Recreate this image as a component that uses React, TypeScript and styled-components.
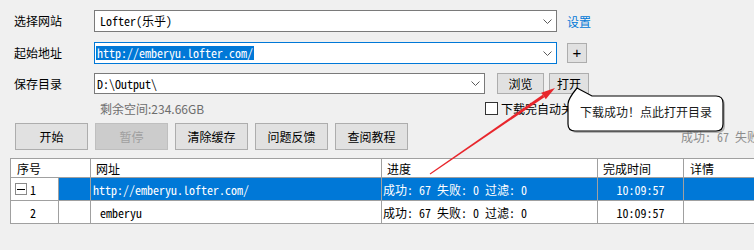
import React from "react";
import styled, { createGlobalStyle } from "styled-components";

const SANS = `"Noto Sans CJK SC", "Noto Sans", sans-serif`;
const MONO = `"Noto Sans Mono CJK SC", "Liberation Mono", "Noto Sans CJK SC", monospace`;

const Global = createGlobalStyle`
  html, body { margin: 0; padding: 0; background: #f0f0f0; }
  body { font-family: ${SANS}; font-size: 12px; color: #000; }
  * { box-sizing: border-box; }
`;

const Window = styled.div`
  position: relative;
  width: 754px;
  height: 250px;
  overflow: hidden;
  background: #f0f0f0;
  display: flex;
  flex-direction: column;
  padding-top: 10px;
`;

const FormRow = styled.div<{ $h: number; $mt?: number }>`
  display: flex;
  align-items: center;
  height: ${(p) => p.$h}px;
  margin-top: ${(p) => p.$mt ?? 0}px;
  padding-left: 14px;
  flex-shrink: 0;
`;

const Label = styled.div`
  width: 80px;
  font-family: ${SANS};
  font-size: 12px;
  line-height: 16px;
  color: #000;
`;

const Combo = styled.div<{ $w: number; $focus?: boolean; $pad: number }>`
  width: ${(p) => p.$w}px;
  height: 100%;
  background: #fff;
  border: 1px solid ${(p) => (p.$focus ? "#0078d7" : "#7a7a7a")};
  display: flex;
  align-items: center;
  padding-left: ${(p) => p.$pad}px;
  padding-right: 4px;
`;

const ComboText = styled.span<{ $selected?: boolean }>`
  font-family: ${MONO};
  font-size: 12px;
  line-height: 14px;
  white-space: nowrap;
  padding: 0 1px;
  color: ${(p) => (p.$selected ? "#fff" : "#000")};
  background: ${(p) => (p.$selected ? "#0078d7" : "transparent")};
`;

const Chevron = styled.svg`
  margin-left: auto;
  flex-shrink: 0;
`;

const LinkText = styled.a`
  margin-left: 10px;
  color: #0078d7;
  font-family: ${SANS};
  font-size: 12px;
  text-decoration: none;
  cursor: pointer;
`;

const SmallButton = styled.button<{ $w: number; $ml: number; $big?: boolean }>`
  width: ${(p) => p.$w}px;
  height: ${(p) => (p.$big ? 20 : 21)}px;
  margin-left: ${(p) => p.$ml}px;
  padding: 0;
  background: #e1e1e1;
  border: 1px solid #adadad;
  border-radius: 0;
  font-family: ${(p) => (p.$big ? `"Liberation Sans", sans-serif` : SANS)};
  font-size: ${(p) => (p.$big ? 15 : 12)}px;
  line-height: 14px;
  color: #000;
  display: flex;
  align-items: center;
  justify-content: center;
`;

const FreeSpace = styled.div`
  width: 385px;
  margin-left: 86px;
  color: #6d6d6d;
  font-family: ${SANS};
  font-size: 12px;
`;

const CheckBox = styled.span`
  width: 13px;
  height: 13px;
  border: 1px solid #333;
  background: #fff;
  flex-shrink: 0;
`;

const CheckLabel = styled.span`
  margin-left: 3px;
  font-family: ${SANS};
  font-size: 12px;
  white-space: nowrap;
`;

const ButtonRow = styled.div`
  display: flex;
  align-items: center;
  gap: 7px;
  margin-top: 6px;
  padding-left: 15px;
  height: 27px;
  flex-shrink: 0;
`;

const ActionButton = styled.button<{ $disabled?: boolean }>`
  width: 73px;
  height: 27px;
  padding: 0;
  border-radius: 0;
  border: 1px solid ${(p) => (p.$disabled ? "#bfbfbf" : "#adadad")};
  background: ${(p) => (p.$disabled ? "#cccccc" : "#e1e1e1")};
  color: ${(p) => (p.$disabled ? "#a0a0a0" : "#000")};
  font-family: ${SANS};
  font-size: 12px;
  flex-shrink: 0;
`;

const StatusText = styled.span`
  margin-left: 266px;
  color: #8c8c8c;
  font-family: ${MONO};
  font-size: 12px;
  white-space: nowrap;
  flex-shrink: 0;
`;

const Table = styled.div`
  margin-top: 8px;
  margin-left: 10px;
  width: 780px;
  display: grid;
  grid-template-columns: 48px 32px 291px 216px 86px 107px;
  border-top: 1px solid #a0a0a0;
  border-left: 1px solid #a0a0a0;
  background: #fff;
  flex-shrink: 0;
`;

const HeadCell = styled.div<{ $span?: number; $pl: number }>`
  grid-column: span ${(p) => p.$span ?? 1};
  height: 19px;
  border-right: 1px solid #a0a0a0;
  border-bottom: 1px solid #a0a0a0;
  padding-left: ${(p) => p.$pl}px;
  display: flex;
  align-items: center;
  font-family: ${SANS};
  font-size: 12px;
  background: #fff;
`;

const Cell = styled.div<{ $sel?: boolean; $pl?: number; $center?: boolean }>`
  height: 23px;
  border-right: 1px solid #a0a0a0;
  border-bottom: 1px solid #a0a0a0;
  padding-left: ${(p) => p.$pl ?? 0}px;
  display: flex;
  align-items: center;
  justify-content: ${(p) => (p.$center ? "center" : "flex-start")};
  background: ${(p) => (p.$sel ? "#0078d7" : "#fff")};
  color: ${(p) => (p.$sel ? "#fff" : "#000")};
  font-family: ${MONO};
  font-size: 12px;
  white-space: nowrap;
  overflow: hidden;
`;

const TreeBox = styled.span`
  width: 12px;
  height: 12px;
  border: 1px solid #8a8a8a;
  background: #fff;
  display: flex;
  align-items: center;
  justify-content: center;
  margin-right: 3px;
  &::after {
    content: "";
    width: 8px;
    height: 1px;
    background: #000;
  }
`;

const Balloon = styled.div`
  position: absolute;
  left: 566px;
  top: 86px;
  width: 164px;
  height: 50px;
`;

const BalloonText = styled.div`
  position: absolute;
  left: 14px;
  top: 18px;
  font-family: ${SANS};
  font-size: 12px;
  line-height: 16px;
  color: #1a1a1a;
  white-space: nowrap;
`;

const Overlay = styled.svg`
  position: absolute;
  left: 0;
  top: 0;
  pointer-events: none;
`;

const ChevronIcon = () => (
  <Chevron width="9" height="5" viewBox="0 0 9 5">
    <path d="M0.5 0.5 L4.5 4.5 L8.5 0.5" fill="none" stroke="#5a5a5a" strokeWidth="1" />
  </Chevron>
);

type Row = {
  idx: string;
  tree?: boolean;
  sel?: boolean;
  url: string;
  urlPad: number;
  progress: string;
  time: string;
};

const rows: Row[] = [
  {
    idx: "1",
    tree: true,
    sel: true,
    url: "http://emberyu.lofter.com/",
    urlPad: 2,
    progress: "成功: 67 失败: 0 过滤: 0",
    time: "10:09:57",
  },
  {
    idx: "2",
    url: "emberyu",
    urlPad: 9,
    progress: "成功: 67 失败: 0 过滤: 0",
    time: "10:09:57",
  },
];

export default function App() {
  return (
    <>
      <Global />
      <Window>
        <FormRow $h={22}>
          <Label>选择网站</Label>
          <Combo $w={463} $pad={4}>
            <ComboText>Lofter(乐乎)</ComboText>
            <ChevronIcon />
          </Combo>
          <LinkText>设置</LinkText>
        </FormRow>
        <FormRow $h={22} $mt={10}>
          <Label>起始地址</Label>
          <Combo $w={463} $pad={1} $focus>
            <ComboText $selected>http://emberyu.lofter.com/</ComboText>
            <ChevronIcon />
          </Combo>
          <SmallButton $w={20} $ml={10} $big>+</SmallButton>
        </FormRow>
        <FormRow $h={21} $mt={9}>
          <Label>保存目录</Label>
          <Combo $w={391} $pad={1}>
            <ComboText>D:\Output\</ComboText>
            <ChevronIcon />
          </Combo>
          <SmallButton $w={47} $ml={12}>浏览</SmallButton>
          <SmallButton $w={40} $ml={5}>打开</SmallButton>
        </FormRow>
        <FormRow $h={17} $mt={6}>
          <FreeSpace>剩余空间:234.66GB</FreeSpace>
          <CheckBox />
          <CheckLabel>下载完自动关机</CheckLabel>
        </FormRow>
        <ButtonRow>
          <ActionButton>开始</ActionButton>
          <ActionButton $disabled>暂停</ActionButton>
          <ActionButton>清除缓存</ActionButton>
          <ActionButton>问题反馈</ActionButton>
          <ActionButton>查阅教程</ActionButton>
          <StatusText>成功: 67 失败: 0</StatusText>
        </ButtonRow>
        <Table>
          <HeadCell $span={2} $pl={6}>序号</HeadCell>
          <HeadCell $pl={5}>网址</HeadCell>
          <HeadCell $pl={5}>进度</HeadCell>
          <HeadCell $pl={5}>完成时间</HeadCell>
          <HeadCell $pl={6}>详情</HeadCell>
          {rows.map((r) => (
            <React.Fragment key={r.idx}>
              <Cell $pl={r.tree ? 4 : 19}>
                {r.tree && <TreeBox />}
                {r.idx}
              </Cell>
              <Cell $sel={r.sel} />
              <Cell $sel={r.sel} $pl={r.urlPad}>{r.url}</Cell>
              <Cell $sel={r.sel} $pl={1}>{r.progress}</Cell>
              <Cell $sel={r.sel} $center>{r.time}</Cell>
              <Cell $sel={r.sel} />
            </React.Fragment>
          ))}
        </Table>

        <Overlay width="754" height="250" viewBox="0 0 754 250">
          <polygon
            points="430.3,174.4 429.7,173.6 542.6,94.8 544.4,97.2"
            fill="#e8262c"
          />
          <polygon points="555,88 541.2,92.7 545.8,99.3" fill="#e8262c" />
        </Overlay>

        <Balloon>
          <Overlay width="164" height="50" viewBox="0 0 164 50">
            <path
              d="M11 2 L26 10 L150 10 Q157 10 157 17 L157 38 Q157 45 150 45 L9 45 Q2 45 2 38 L2 18 Q2 13 11 2 Z"
              transform="translate(2 2)"
              fill="#8a8a8a"
              opacity="0.6"
            />
            <path
              d="M11 2 L26 10 L150 10 Q157 10 157 17 L157 38 Q157 45 150 45 L9 45 Q2 45 2 38 L2 18 Q2 13 11 2 Z"
              fill="#fff"
              stroke="#000"
              strokeWidth="1.2"
            />
          </Overlay>
          <BalloonText>下载成功！点此打开目录</BalloonText>
        </Balloon>
      </Window>
    </>
  );
}
